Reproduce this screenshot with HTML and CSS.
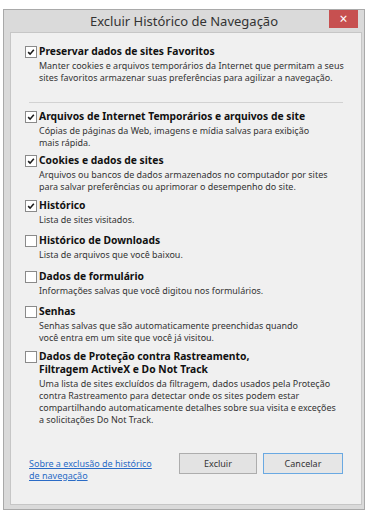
FILE: index.html
```html
<!DOCTYPE html>
<html lang="pt-BR">
<head>
<meta charset="utf-8">
<title>Excluir Histórico de Navegação</title>
<link rel="stylesheet" href="styles.css">
</head>
<body>
<div class="window">
  <div class="titlebar">
    <span class="spacer"></span>
    <span class="title">Excluir Histórico de Navegação</span>
    <span class="close">×</span>
  </div>
  <div class="panel">
    <div class="item">
      <span class="box checked"><svg viewBox="0 0 12 12" width="12" height="12"><path d="M2.6 6.2 L4.9 8.6 L9.4 3.2" fill="none" stroke="#1a1a1a" stroke-width="1.9"/></svg></span>
      <div class="body">
        <div class="label">Preservar dados de sites Favoritos</div>
        <div class="desc">Manter cookies e arquivos temporários da Internet que permitam a seus<br>sites favoritos armazenar suas preferências para agilizar a navegação.</div>
      </div>
    </div>
    <div class="sep"></div>
    <div class="item">
      <span class="box checked"><svg viewBox="0 0 12 12" width="12" height="12"><path d="M2.6 6.2 L4.9 8.6 L9.4 3.2" fill="none" stroke="#1a1a1a" stroke-width="1.9"/></svg></span>
      <div class="body">
        <div class="label">Arquivos de Internet Temporários e arquivos de site</div>
        <div class="desc">Cópias de páginas da Web, imagens e mídia salvas para exibição<br>mais rápida.</div>
      </div>
    </div>
    <div class="item">
      <span class="box checked"><svg viewBox="0 0 12 12" width="12" height="12"><path d="M2.6 6.2 L4.9 8.6 L9.4 3.2" fill="none" stroke="#1a1a1a" stroke-width="1.9"/></svg></span>
      <div class="body">
        <div class="label">Cookies e dados de sites</div>
        <div class="desc">Arquivos ou bancos de dados armazenados no computador por sites<br>para salvar preferências ou aprimorar o desempenho do site.</div>
      </div>
    </div>
    <div class="item">
      <span class="box checked"><svg viewBox="0 0 12 12" width="12" height="12"><path d="M2.6 6.2 L4.9 8.6 L9.4 3.2" fill="none" stroke="#1a1a1a" stroke-width="1.9"/></svg></span>
      <div class="body">
        <div class="label">Histórico</div>
        <div class="desc">Lista de sites visitados.</div>
      </div>
    </div>
    <div class="item">
      <span class="box"></span>
      <div class="body">
        <div class="label">Histórico de Downloads</div>
        <div class="desc">Lista de arquivos que você baixou.</div>
      </div>
    </div>
    <div class="item">
      <span class="box"></span>
      <div class="body">
        <div class="label">Dados de formulário</div>
        <div class="desc">Informações salvas que você digitou nos formulários.</div>
      </div>
    </div>
    <div class="item">
      <span class="box"></span>
      <div class="body">
        <div class="label">Senhas</div>
        <div class="desc">Senhas salvas que são automaticamente preenchidas quando<br>você entra em um site que você já visitou.</div>
      </div>
    </div>
    <div class="item">
      <span class="box"></span>
      <div class="body">
        <div class="label">Dados de Proteção contra Rastreamento,<br>Filtragem ActiveX e Do Not Track</div>
        <div class="desc">Uma lista de sites excluídos da filtragem, dados usados pela Proteção<br>contra Rastreamento para detectar onde os sites podem estar<br>compartilhando automaticamente detalhes sobre sua visita e exceções<br>a solicitações Do Not Track.</div>
      </div>
    </div>
    <div class="footer">
      <a class="help" href="#">Sobre a exclusão de histórico<br>de navegação</a>
      <div class="buttons">
        <button class="btn">Excluir</button>
        <button class="btn default">Cancelar</button>
      </div>
    </div>
  </div>
</div>
</body>
</html>
```

FILE: styles.css
```css
html, body {
  margin: 0;
  padding: 0;
  background: #ffffff;
}

body {
  font-family: "Noto Sans", "Open Sans", sans-serif;
  color: #222;
}

.window {
  box-sizing: border-box;
  margin: 9px 0 0 3px;
  width: 362px;
  height: 501px;
  border: 1px solid #a9a9a9;
  background: #dadada;
  display: flex;
  flex-direction: column;
}

.titlebar {
  height: 22px;
  display: grid;
  grid-template-columns: 1fr auto 1fr;
  align-items: start;
}

.title {
  font-size: 13px;
  line-height: 20px;
  color: #333;
  white-space: nowrap;
  padding-top: 1px;
}

.close {
  justify-self: end;
  margin-right: 6px;
  width: 29px;
  height: 18px;
  background: #c75050;
  color: #fff;
  font-size: 14px;
  line-height: 17px;
  text-align: center;
}

.panel {
  box-sizing: border-box;
  margin: 0 0 0 6px;
  width: 352px;
  height: 473px;
  border: 1px solid #c6c6c6;
  background: #f0f0f0;
  padding: 12px 14px 0 14px;
  display: flex;
  flex-direction: column;
}

.item {
  display: flex;
  align-items: flex-start;
  margin-bottom: 5.5px;
}

.box {
  box-sizing: border-box;
  flex: none;
  width: 12px;
  height: 12px;
  margin-top: 1px;
  margin-right: 2px;
  border: 1px solid #8a8a8a;
  background: #fff;
  display: flex;
  align-items: center;
  justify-content: center;
}

.box svg {
  display: block;
  width: 10px;
  height: 10px;
}

.label {
  font-size: 10.3px;
  font-weight: 700;
  line-height: 13px;
  color: #111;
  white-space: nowrap;
  margin-bottom: 2px;
}

.desc {
  font-size: 8.95px;
  line-height: 12px;
  min-height: 15px;
  color: #333;
  white-space: nowrap;
}

.sep {
  height: 1px;
  background: #d2d2d2;
  margin: 12px 4px 7px 4px;
}

.footer {
  margin: auto 4px 22px 4px;
  display: flex;
  justify-content: space-between;
  align-items: flex-start;
}

.help {
  margin-top: 5px;
  font-size: 9px;
  line-height: 12px;
  color: #2a6bc6;
  text-decoration: underline;
}

.buttons {
  display: flex;
  gap: 6px;
}

.btn {
  box-sizing: border-box;
  width: 78px;
  height: 21px;
  border: 1px solid #adadad;
  background: #e3e3e3;
  font-family: "Noto Sans", "Open Sans", sans-serif;
  font-size: 9px;
  color: #333;
  padding: 0;
}

.btn.default {
  width: 80px;
  border-color: #6aa9e2;
  background: #e6e6e6;
}
```
